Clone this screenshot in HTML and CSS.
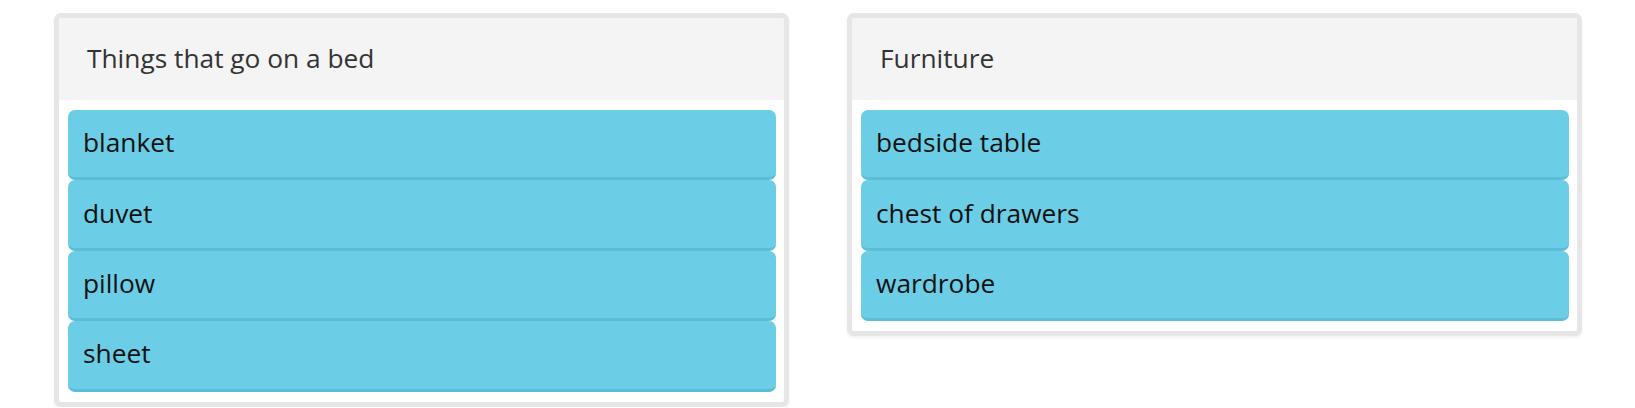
FILE: index.html
```html
<!DOCTYPE html>
<html>
<head>
<meta charset="utf-8">
<link rel="stylesheet" href="styles.css">
</head>
<body>
<div class="board">
  <section class="card">
    <header class="card-head">Things that go on a bed</header>
    <div class="items">
      <div class="item">blanket</div>
      <div class="item">duvet</div>
      <div class="item">pillow</div>
      <div class="item">sheet</div>
    </div>
  </section>
  <section class="card">
    <header class="card-head">Furniture</header>
    <div class="items">
      <div class="item">bedside table</div>
      <div class="item">chest of drawers</div>
      <div class="item">wardrobe</div>
    </div>
  </section>
</div>
</body>
</html>
```

FILE: styles.css
```css
html, body {
  margin: 0;
  padding: 0;
  background: #ffffff;
}
body {
  font-family: "Open Sans", "Noto Sans", sans-serif;
}
.board {
  display: flex;
  align-items: flex-start;
  gap: 58px;
  padding: 13px 0 0 54px;
}
.card {
  width: 725px;
  border: 5px solid #e6e6e6;
  border-radius: 7px;
  background: #ffffff;
  box-shadow: 0 2px 3px rgba(0,0,0,0.06);
}
.card-head {
  height: 82px;
  box-sizing: border-box;
  display: flex;
  align-items: center;
  padding: 0 0 2px 28px;
  background: #f4f4f4;
  color: #333333;
  font-size: 26.3px;
  border-radius: 2px 2px 0 0;
}
.items {
  display: flex;
  flex-direction: column;
  padding: 10px 8px 10px 9px;
}
.item {
  height: 70.4px;
  box-sizing: border-box;
  display: flex;
  align-items: center;
  padding: 0 0 3px 15px;
  background: #6bcde6;
  border-bottom: 3px solid #5bbdd6;
  border-radius: 7px;
  color: #111111;
  font-size: 26.3px;
}
```
